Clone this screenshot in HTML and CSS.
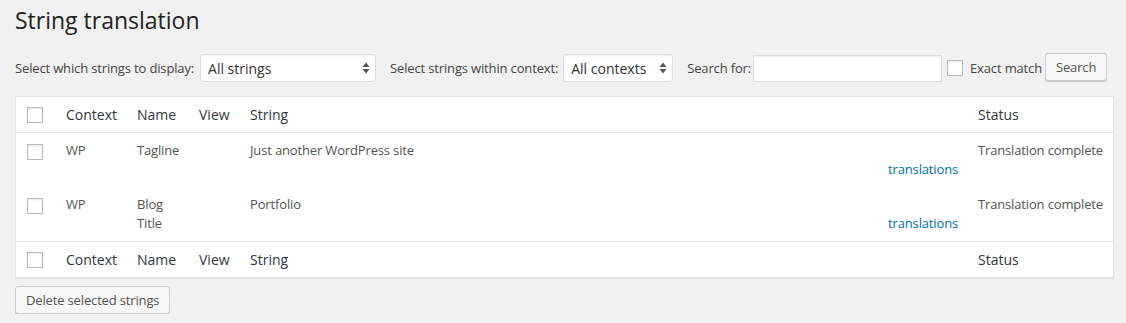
FILE: index.html
```html
<!DOCTYPE html>
<html lang="en">
<head>
  <meta charset="UTF-8">
  <title>String translation</title>
  <link rel="stylesheet" href="styles.css">
</head>
<body>
  <div class="wrap">
    <h1>String translation</h1>

    <form class="filters">
      <label class="filter-label label-status" for="status">Select which strings to display:</label>
      <div class="select-box select-status">
        <select id="status">
          <option>All strings</option>
        </select>
        <svg class="arrows" width="8" height="12" viewBox="0 0 8 12"><path d="M4 0.5 L7.5 5 H0.5 Z M4 11.5 L7.5 7 H0.5 Z" fill="#555"/></svg>
      </div>

      <label class="filter-label" for="context">Select strings within context:</label>
      <div class="select-box select-context">
        <select id="context">
          <option>All contexts</option>
        </select>
        <svg class="arrows" width="8" height="12" viewBox="0 0 8 12"><path d="M4 0.5 L7.5 5 H0.5 Z M4 11.5 L7.5 7 H0.5 Z" fill="#555"/></svg>
      </div>

      <label class="filter-label label-search" for="search">Search for:</label>
      <input type="text" id="search" class="search-input">
      <input type="checkbox" id="exact" class="cb exact-cb">
      <label class="exact-label" for="exact">Exact match</label>
      <button type="button" class="button">Search</button>
    </form>

    <table class="strings-table">
      <colgroup>
        <col class="col-cb">
        <col class="col-context">
        <col class="col-name">
        <col class="col-view">
        <col>
        <col class="col-status">
      </colgroup>
      <thead>
        <tr>
          <th class="check-column"><input type="checkbox" class="cb"></th>
          <th>Context</th>
          <th>Name</th>
          <th>View</th>
          <th>String</th>
          <th>Status</th>
        </tr>
      </thead>
      <tbody>
        <tr>
          <td class="check-column"><input type="checkbox" class="cb"></td>
          <td>WP</td>
          <td>Tagline</td>
          <td></td>
          <td>
            <div>Just another WordPress site</div>
            <div class="translations-link"><a href="#">translations</a></div>
          </td>
          <td class="status-cell">Translation complete</td>
        </tr>
        <tr>
          <td class="check-column"><input type="checkbox" class="cb"></td>
          <td>WP</td>
          <td>Blog Title</td>
          <td></td>
          <td>
            <div>Portfolio</div>
            <div class="translations-link"><a href="#">translations</a></div>
          </td>
          <td class="status-cell">Translation complete</td>
        </tr>
      </tbody>
      <tfoot>
        <tr>
          <th class="check-column"><input type="checkbox" class="cb"></th>
          <th>Context</th>
          <th>Name</th>
          <th>View</th>
          <th>String</th>
          <th>Status</th>
        </tr>
      </tfoot>
    </table>

    <button type="button" class="button delete-button">Delete selected strings</button>
  </div>
</body>
</html>
```

FILE: styles.css
```css
body {
  margin: 0;
  padding: 0;
  background-color: #f1f1f1;
  color: #444;
  font-family: 'Open Sans', sans-serif;
  font-size: 13px;
  letter-spacing: -0.15px;
}

.wrap {
  margin: 0 12px 0 15px;
}

h1 {
  margin: 0;
  padding-top: 6px;
  font-size: 23px;
  font-weight: 400;
  line-height: 29px;
  letter-spacing: 0;
  color: #222;
}

/* filter bar */
.filters {
  display: flex;
  align-items: center;
  margin-top: 19px;
  height: 28px;
  white-space: nowrap;
}

.filters > * {
  flex-shrink: 0;
}

.filter-label {
  margin-right: 5px;
  color: #444;
}

.label-status {
  margin-right: 6px;
}

.label-search {
  margin-right: 2px;
}

.select-box {
  position: relative;
  margin-right: 14px;
}

.select-box select {
  appearance: none;
  -webkit-appearance: none;
  display: block;
  height: 28px;
  padding: 0 20px 0 7px;
  border: 1px solid #ddd;
  border-radius: 3px;
  background: #fff;
  box-shadow: inset 0 1px 2px rgba(0, 0, 0, 0.07);
  font-family: 'Open Sans', sans-serif;
  font-size: 14px;
  color: #333;
  outline: none;
}

.select-status select {
  width: 176px;
}

.select-context select {
  width: 110px;
}

.select-box .arrows {
  position: absolute;
  right: 6px;
  top: 8px;
  pointer-events: none;
}

.search-input {
  width: 189px;
  height: 27px;
  box-sizing: border-box;
  margin: 0 5px 0 0;
  border: 1px solid #ddd;
  background: #fff;
  box-shadow: inset 0 1px 2px rgba(0, 0, 0, 0.07);
  outline: none;
}

.cb {
  appearance: none;
  -webkit-appearance: none;
  width: 16px;
  height: 16px;
  margin: 0;
  border: 1px solid #bbb;
  background: #fff;
  box-shadow: inset 0 1px 2px rgba(0, 0, 0, 0.1);
  box-sizing: border-box;
  display: block;
}

.exact-cb {
  margin-right: 7px;
}

.exact-label {
  margin-right: 3px;
  color: #444;
}

.button {
  height: 28px;
  padding: 0 10px 2px;
  border: 1px solid #ccc;
  border-radius: 3px;
  background: #f7f7f7;
  box-shadow: 0 1px 0 #ccc;
  font-family: 'Open Sans', sans-serif;
  font-size: 13px;
  letter-spacing: -0.15px;
  line-height: 26px;
  color: #555;
  white-space: nowrap;
  cursor: pointer;
}

.filters .button {
  margin-top: -3px;
}

/* table */
.strings-table {
  width: 100%;
  margin-top: 14px;
  border: 1px solid #e5e5e5;
  border-spacing: 0;
  background: #fff;
  box-shadow: 0 1px 1px rgba(0, 0, 0, 0.04);
  table-layout: fixed;
}

.col-cb { width: 40px; }
.col-context { width: 71px; }
.col-name { width: 62px; }
.col-view { width: 51px; }
.col-status { width: 145px; }

.strings-table th {
  padding: 8px 10px;
  text-align: left;
  font-size: 14px;
  font-weight: 400;
  line-height: 19px;
  letter-spacing: 0;
  color: #32373c;
}

.strings-table thead th {
  border-bottom: 1px solid #e1e1e1;
}

.strings-table tfoot th {
  border-top: 1px solid #e1e1e1;
}

.strings-table td {
  padding: 8px 10px;
    vertical-align: top;
  line-height: 19px;
  color: #555;
}

.strings-table .status-cell {
  padding-right: 0;
  white-space: nowrap;
}

.strings-table .check-column {
  padding: 10px 0 0 11px;
  vertical-align: top;
}

.strings-table td.check-column {
  padding-top: 11px;
}

.translations-link {
  text-align: right;
}

.translations-link a {
  color: #0074a2;
  text-decoration: none;
}

.delete-button {
  margin-top: 8px;
}
```
